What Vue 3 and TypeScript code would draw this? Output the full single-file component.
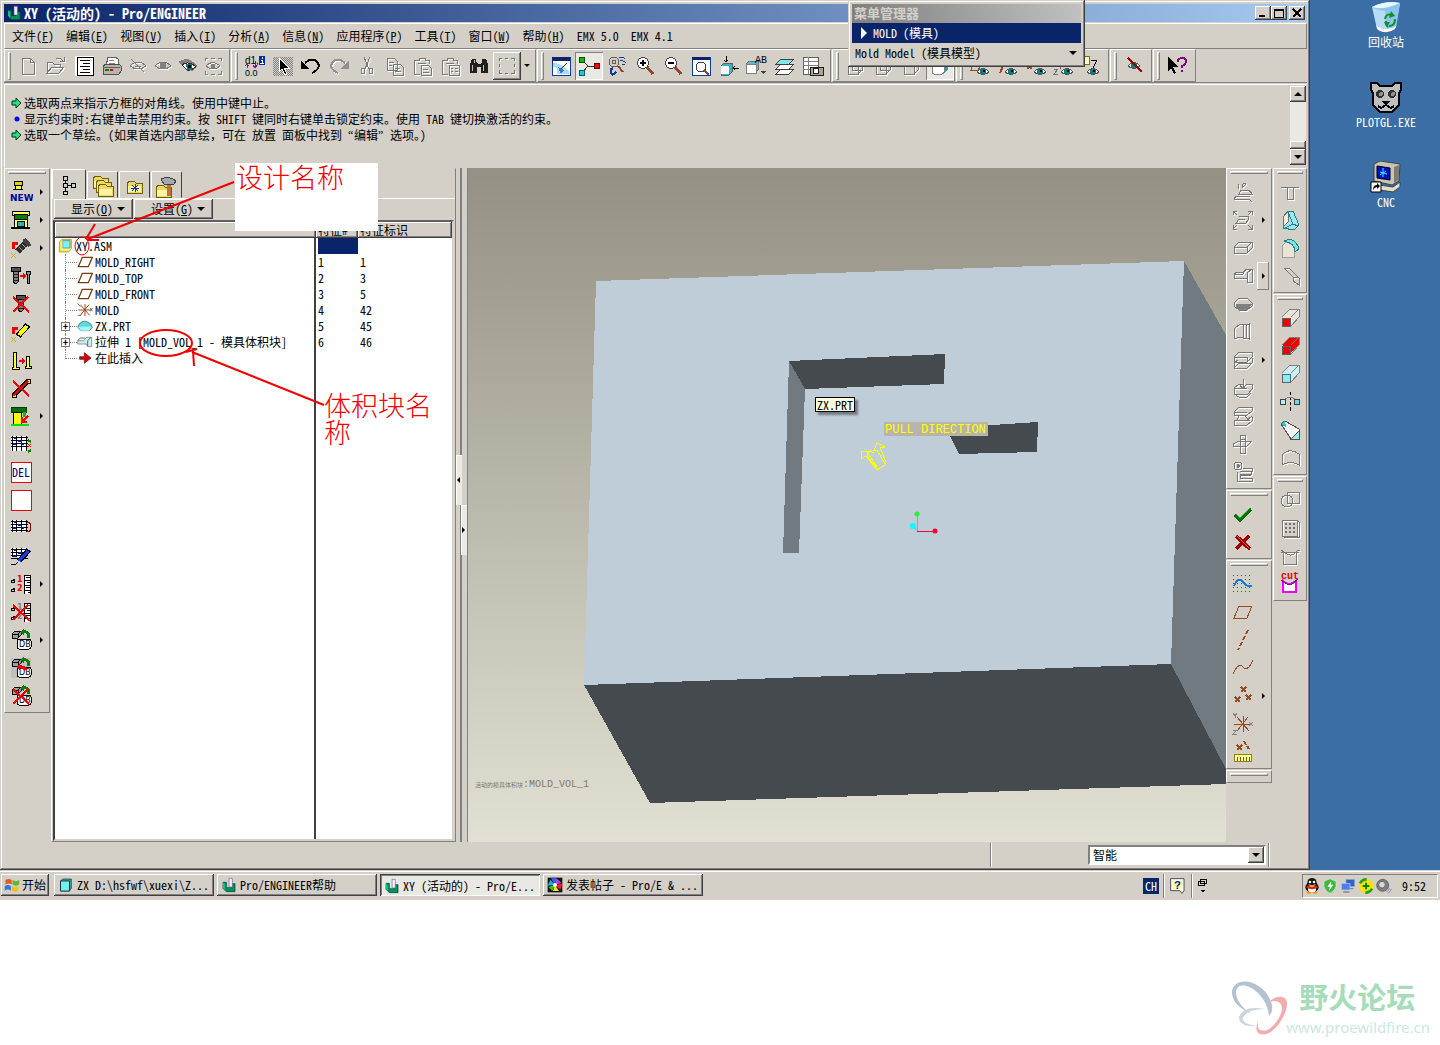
<script setup lang="ts">
import { ref } from 'vue'

interface Tool { icon: string; label: string; kind?: string; more?: boolean; boxed?: boolean }

/* ---- icon helpers: 24 x 24 grid ---- */
const line = (d: string, c = '#000', w = 1) => `<path d="${d}" fill="none" stroke="${c}" stroke-width="${w}"/>`
const fill = (d: string, c: string, s = 'none') => `<path d="${d}" fill="${c}" stroke="${s}"/>`
const gray = (d: string) => `<g transform="translate(1 1)">${line(d, '#fff')}</g>${line(d, '#787878')}`
const eye = (x: number, y: number, c = '#008080') =>
  `<g transform="translate(${x} ${y})">${fill('M0 5 Q6 -2 12 5 Q6 10 0 5z', '#fff', '#555')}<circle cx="6" cy="4.5" r="2.8" fill="${c}"/><path d="M6 3h2v2h-2z" fill="#000"/></g>`
const cross = (c = '#f00000') => line('M4 5L20 20M19 5L4 20', c, 2)
const lens = (extra: string) =>
  `<circle cx="10" cy="9" r="5.5" fill="#fff" stroke="#404040"/>${line('M14 13l6 7', '#8b4a2b', 3)}${extra}`
const grid = (h: number) =>
  `<rect x="2" y="4" width="16" height="${h}" fill="#fff"/>` + line(`M2 5h17M2 8h17M2 11h17M2 14h17M3 4v${h}M7 4v${h}M12 4v${h}M17 4v${h}`) + line('M4 12h3M9 9h4M12 12h3M5 6h2', '#0a1f8f', 2)
const db =
  fill('M3 6l3-3h6v4l-3 3H3z', '#a0a0a0', '#000') + line('M3 6h6v4M9 6l3-3') + line('M15 4q5-1 5 6', '#008000', 3) + fill('M11 4l4-3v6z', '#008000') +
  `<rect x="8" y="11" width="14" height="10" rx="2" fill="#fff" stroke="#000"/><text x="10" y="19" font-size="8" font-family="DejaVu Sans" fill="#000">DB</text>`
const numbered = (c: string) =>
  line('M3 9l3-2M3 18l3-2') + line('M2 8h3v2h-3zM2 17h3v2h-3z') +
  `<text x="8" y="10" font-size="8" font-weight="bold" font-family="DejaVu Sans" fill="${c}">1</text><text x="8" y="19" font-size="8" font-weight="bold" font-family="DejaVu Sans" fill="${c}">2</text><rect x="15" y="3" width="7" height="19" fill="#fff"/>` +
  line('M15 3h7M15 8h7M15 13h7M15 18h7M15 3v19M17 5h4M18 10h3M17 15h4M19 20h3M21 3v19')
const block = (front: string, top: string) =>
  fill('M4 11l8-8h9v7l-8 9', top) + line('M4 11l8-8h9v8l-8 9M13 11l8-8', '#808080') + `<rect x="4" y="12" width="8" height="8" fill="${front}" stroke="#606060"/>`
const bolt = fill('M2 3h9v4H2z', '#505050', '#000') + fill('M4 7h5v11l-2 2-3-2z', '#808080', '#000') + line('M4 10h5M4 13h5M4 16h5', '#222')
const folder = (x: number, y: number) => `<g transform="translate(${x} ${y})">${fill('M0 3l2-3h5l2 2h6v10H0z', '#f0d860', '#6a6200')}${fill('M1 5h13v6H1z', '#fdf3a0')}</g>`

const icons: Record<string, string> = {
  app: fill('M3 8h5v8h7v-6h6v12H8l-5-5z', '#009060', '#003828') + fill('M3 8l3 3v8l-3-3z', '#00c890') + fill('M12 2h5v13h-5z', '#e8e8f0', '#6070a0') + line('M15 3v11', '#fff'),
  new: gray('M6 4h8l4 4v12H6zM14 4v4h4'),
  open: gray('M3 19V8h5l2 2h6v3M3 19l5-6h12l-5 6zM12 5q4-2 7 2m1-4v4h-4'),
  list: '<rect x="3" y="2" width="19" height="20" fill="#fff"/>' + line('M5 3h16v18H5zM8 6h10M11 9h7M8 12h10M11 15h7M8 18h10'),
  print: fill('M8 3h7l3 2v7H6z', '#fff', '#606060') + line('M9 6h5M9 9h6', '#808080') + fill('M3 12l3-2h13l2 2v5l-2 3H3z', '#b8b4ac', '#505050') + line('M5 16h4', '#008000', 2) + line('M10 16h3', '#e00000', 2) + line('M3 13h17', '#606060'),
  hide: gray('M4 12q8-8 16 0q-8 6-16 0M9 12h6M5 5l13 13'),
  show: gray('M4 12q8-8 16 0q-8 6-16 0') + fill('M9 9h6v6H9z', '#808080'),
  view: fill('M2 8q10-6 15 0l4 4-5 5q-7-2-10-6z', '#808080') + fill('M6 11q6-5 14 2-6 4-9 3z', '#fff', '#303030') + fill('M10 10h6v6h-5z', '#007878') + fill('M12 11h3v3h-3z', '#000'),
  viewbox: gray('M4 7V4h3M10 4h4M17 4h3v3M4 17v3h3M10 20h4M17 20h3v-3M5 12q7-7 14 0q-7 6-14 0') + fill('M10 10h4v4h-4z', '#808080'),
  dim: '<text x="2" y="10" font-size="10" font-family="Liberation Sans" fill="#000">d1,</text><text x="2" y="22" font-size="9" font-family="Liberation Sans" fill="#000">0.0</text>' + line('M4 14V10M2 12l2-2 2 2M12 7v7M10 11l2 3 2-3', '#a000a0', 1) + '<rect x="16" y="2" width="6" height="9" fill="#0030a0"/><path d="M19 3v2M18 6h1v3M17 9h4" stroke="#fff" fill="none"/>',
  pointer: '<rect x="2" y="3" width="20" height="19" fill="url(#dither)"/>' + fill('M8 4v14l3-3 3 6 2-1-3-6h5z', '#000', '#fff'),
  undo: line('M6 9q8-7 13 0q3 6-6 10', '#000', 2) + fill('M2 6v9h8z', '#000'),
  redo: `<g>${line('M19 10q-8-7-13 0q-3 6 6 10', '#fff', 2)}${line('M18 9q-8-7-13 0q-3 6 6 10', '#909090', 2)}${fill('M22 6v9h-8z', '#909090')}</g>`,
  cut: gray('M9 3l5 12M15 3l-5 12M6 17a2 3 0 1 0 4 0a2 3 0 1 0-4 0M14 17a2 3 0 1 0 4 0a2 3 0 1 0-4 0'),
  copy: gray('M4 4h7l3 3v9H4zM10 10h7l3 3v8H10zM6 8h5M6 11h3M12 14h5M12 17h6'),
  paste: gray('M3 6h5V4h6v2h4v4M3 6v14h6M7 9h8M10 11h7l3 3v7H10zM12 15h5M12 18h6'),
  pastex: gray('M3 6h5V4h6v2h4v4M3 6v14h6M7 9h8M10 11h10v10H10zM12 14h2M16 14h3M12 17h2M16 17h3'),
  find: fill('M5 5h4v3l2 2h2l2-2V5h4l2 5v9h-7v-6h-4v6H3v-9z', '#202020') + line('M5 11v6M16 11v6M7 6v3', '#c0c0c0'),
  marquee: line('M4 7V4h3M10 4h3M16 4h3v3M19 10v3M19 16v3h-3M13 19h-3M7 19H4v-3M4 13v-3', '#fff').replace('<path', '<path transform="translate(1 1)"') + line('M4 7V4h3M10 4h3M16 4h3v3M19 10v3M19 16v3h-3M13 19h-3M7 19H4v-3M4 13v-3', '#707070'),
  repaint: '<rect x="3" y="3" width="18" height="18" fill="#fff" stroke="#0a3fa0"/><path d="M3 3h18v4H3z" fill="#0a246a"/>' + fill('M4 9q8 0 16 8v3H8q2-7-4-7z', '#a8dcf8') + line('M18 9l-7 7', '#203060', 1) + fill('M9 13l6 3-3 4z', '#3878c0'),
  spin: line('M5 6l6 6 9 0M11 12l-6 7', '#303030') + '<circle cx="5" cy="6" r="3" fill="#00c000" stroke="#005000"/><circle cx="20" cy="12" r="3" fill="#e01010" stroke="#700000"/><circle cx="5" cy="19" r="3" fill="#20c8d8" stroke="#006070"/>',
  orient: '<circle cx="9" cy="8" r="5" fill="#d0ccc0" stroke="#606060"/><circle cx="9" cy="8" r="2" fill="none" stroke="#606060"/>' + line('M13 12l5 6', '#8b4a2b', 2) + line('M14 4q3-2 6 1M15 7q4-1 6 2M17 10h3', '#0a3fa0') + line('M7 15q-3 3 1 6M5 16l3-2M8 21l3-3', '#0a3fa0', 2),
  zoomin: lens(line('M7 9h6M10 6v6', '#000', 2)),
  zoomout: lens(line('M7 9h6', '#000', 2)),
  refit: '<rect x="3" y="3" width="18" height="18" fill="#fff" stroke="#0a3fa0"/><path d="M3 3h18v3H3z" fill="#0a246a"/><circle cx="12" cy="13" r="5" fill="#fff" stroke="#404040"/>' + line('M15 16l5 5', '#8b4a2b', 2),
  reorient: fill('M4 12l3-3h8v9l-3 3H4z', '#30b8c8', '#606060') + '<rect x="4" y="12" width="8" height="8" fill="#fff"/>' + line('M9 2v6M7 6l2 2 2-2M22 14h-6M18 12l-2 2 2 2', '#000', 1),
  views: fill('M1 10l3-3h9v9l-3 3H1z', '#60b8c8', '#707070') + '<rect x="1" y="10" width="10" height="9" fill="#fff" stroke="#808080"/><text x="10" y="9" font-size="10" font-family="Liberation Mono" fill="#000">AB</text>' + fill('M15 17h6l-3 3z', '#404040'),
  layers: fill('M3 20l5-5h13l-5 5z', '#fff', '#404040') + fill('M3 15l5-5h13l-5 5z', '#fff', '#404040') + fill('M3 10l5-5h13l-5 5z', '#80e8e8', '#404040'),
  viewmgr: '<rect x="2" y="3" width="15" height="17" fill="#fff" stroke="#606060"/>' + line('M2 7h15M2 11h15M2 15h15M7 3v17', '#808080') + '<rect x="9" y="13" width="13" height="8" fill="#a8a498" stroke="#202020"/><circle cx="15" cy="17" r="3" fill="#fff" stroke="#202020"/>',
  wire: gray('M4 10h10v10H4zM8 6h10v10H8zM4 10l4-4M14 10l4-4M14 20l4-4'),
  hidden: gray('M4 10h10v10H4zM4 10l4-4h10v10l-4 4M8 6v10h10'),
  nohid: gray('M4 10h10v10H4zM4 10l4-4h10v10l-4 4M14 10l4-4'),
  shade: fill('M5 9l4-4h11v10l-5 5', '#20a0a0') + '<rect x="4" y="8" width="12" height="12" rx="2" fill="#fff" stroke="#808080"/>',
  planes: line('M5 4l-2 12h7l9-12M12 4h6', '#964b1e') + eye(9, 13),
  axes: line('M9 4l-1 6M7 12l-3 7', '#964b1e', 2) + eye(9, 13),
  points: line('M3 10l5 5M8 10l-5 5M10 4l4 4M17 4l-3 5', '#964b1e', 2) + eye(10, 13),
  csys: line('M5 8h12M8 15l5-9 5 6', '#964b1e') + line('M2 15h4l-4 5h4M17 9l4 4M21 9l-4 4', '#707070') + eye(9, 13),
  annot: '<rect x="0" y="2" width="9" height="8" fill="#ffffc0" stroke="#807000"/>' + line('M11 6h6l-4 8') + eye(7, 13),
  spineye: eye(6, 7) + line('M6 4l14 14', '#900000', 2),
  help: fill('M3 3v14l3-3 3 6 2-1-3-6h5z', '#000') + line('M13 8q0-4 4-4t4 3-4 5v2M17 16v2', '#800080', 2),
  mnew: fill('M5 1h8v4H5z', '#d8d800', '#000') + fill('M6 5h6v4H6z', '#fff840', '#000') + line('M4 9h10') + '<text x="1" y="21" font-size="9" font-weight="bold" font-family="DejaVu Sans" fill="#0000a0">NEW</text>',
  mold: '<rect x="3" y="3" width="17" height="4" fill="#ffff60" stroke="#000"/><rect x="5" y="6" width="13" height="5" fill="#008000" stroke="#000"/><rect x="5" y="11" width="13" height="9" fill="#ffff60" stroke="#000"/><rect x="8" y="13" width="7" height="5" fill="#20b8b8" stroke="#000"/>' + line('M2 20h19', '#000', 2),
  screwnew: line('M8 16l8-8', '#303030', 6) + line('M7 14l4 4M10 11l4 4M13 8l4 4', '#a0a0a0') + line('M15 3l6 7', '#404040', 4) + line('M4 13V7h5', '#f00000', 3) + line('M2 17l5 5M7 17l-5 5', '#d0b000'),
  screwedit: bolt + line('M11 12h5', '#f00000', 2) + fill('M14 9l3 3-3 3z', '#f00000') + fill('M17 7h4v3h-1v9h-2V10h-1z', '#909090', '#000'),
  screwdel: '<g transform="translate(5 0)">' + bolt + '</g>' + cross(),
  pinnew: line('M9 16l10-11', '#000', 6) + line('M10 15l8-9', '#ffff00', 4) + line('M4 14V8h5', '#f00000', 3) + line('M2 17l5 5M7 17l-5 5', '#d0b000'),
  pinedit: fill('M4 4h3v15h3v2H3v-2h1z', '#ffff40', '#000') + line('M10 13h5', '#f00000', 2) + fill('M13 10l3 3-3 3z', '#f00000') + fill('M17 8h3v10h2v2h-6v-2h1z', '#ffff40', '#000'),
  pindel: line('M5 19L19 5', '#000', 5) + fill('M17 3h4v4h-4zM3 17h4v4H3z', '#ffff40', '#000') + cross(),
  plate: '<rect x="2" y="3" width="15" height="5" fill="#007000" stroke="#004000"/><rect x="4" y="8" width="8" height="12" fill="#ffff00" stroke="#000"/>' + line('M2 21h18', '#00e000', 2) + line('M15 8v5', '#00c000', 3) + line('M19 12l-5 5M13 13v5h5', '#f00000', 2),
  bom: grid(15) + line('M19 8l3 2M22 18l-3 2', '#008000', 2) + line('M19 12l3 3M22 12l-3 3', '#f00000', 1),
  del: '<rect x="2" y="2" width="20" height="20" fill="#fff" stroke="#f00000"/><text x="3" y="17" font-size="12" font-family="Noto Sans Mono CJK SC" fill="#00007a">DEL</text>',
  blank: '<rect x="2" y="2" width="20" height="20" fill="#fff" stroke="#f00000"/>',
  bomsec: grid(12) + line('M18 6q4 0 4 5t-4 5', '#900000', 1),
  bomedit: grid(9) + line('M10 17L20 6', '#000', 5) + line('M10 17L19 7', '#1040e0', 3) + line('M2 20h5l2-2'),
  num: numbered('#f00000'),
  numdel: numbered('#808080') + cross(),
  db1: db,
  db2: '<rect x="2" y="2" width="20" height="20" fill="#c0c0c0"/>' + db + line('M17 14q-2-4-8-3', '#f00000', 3) + fill('M7 11l4-3v6z', '#f00000'),
  db3: db + cross(),
  r1: gray('M3 19h15l3 3M3 19q0-3 7-3h9M8 14l2-4h8l3 4zM7 4v5M11 8V5q1-2 4-1l-3 3'),
  r2: gray('M2 7V3h4M2 3l4 4M17 3h4v4M21 3l-4 4M2 17v4h4M2 21l4-4M17 21h4v-4M21 21l-4-4M8 8h7q3 0 3 3l-3 4H5l3-4h6'),
  r3: gray('M3 11l5-5h13v6l-5 5H3zM3 11h13v6M16 11l5-5'),
  r4: gray('M3 10h9l3-5h6v13h-5v-4H3zM3 10l3-2h6l3-3M16 9l5-4M16 9v9'),
  r5: fill('M3 12h18l-6 6H8z', '#808080') + gray('M3 11l5-5h8l5 5v3l-5 4H8l-5-4z'),
  r6: gray('M3 19V9q6-6 9-4v13q-4-1-9 1zM12 5l6-1v15l-6-1M15 5v13'),
  r7: gray('M3 9l5-5h13v5l-5 5H3zM3 9h13v5M3 15l4-3M3 15v5h13l5-5v-5M3 20l5-5h13'),
  r8: gray('M3 12l5-4h4M15 8h6v5l-4 5H3v-6h13M12 3v9M9 9l3 4 3-4M3 18l5 3h8l4-4'),
  r9: gray('M3 8l5-5h13v4l-5 4H3zM3 8h13M8 12l-2 4h12l-4-4M3 16h13l5-4M3 16v5h13l5-4v-4'),
  r10: gray('M2 12l6-3h13l-5 5H2zM9 3h5v18H9zM9 7h5'),
  r11: gray('M3 6a4 4 0 1 0 8 0a4 4 0 1 0-8 0M6 4l3 2-3 2zM12 8h9v3H9M9 14h11v-3M6 12v9h15v-3H9M9 18v-3h11'),
  ok: line('M4 13l5 5L20 7', '#007000', 4) + line('M5 12l4 4 10-10', '#18b818', 1),
  no: line('M5 6l14 13M18 6L5 19', '#a00000', 4) + line('M5 5l13 13', '#e05050', 1),
  sketch: line('M2 3h20M2 7h20M2 11h20M2 15h20M2 19h20', '#2050b0').replace('/>', ' stroke-dasharray="1 3"/>') + line('M3 14q4-10 9-4t9 4', '#1878e0', 2),
  plane: line('M3 18L8 6h13l-5 12z', '#964b1e'),
  axis: line('M17 2l-2 4M14 8l-2 4M11 14l-2 4M8 20l-1 2', '#964b1e', 2),
  curve: line('M2 18q5-12 10-7t10-7', '#964b1e'),
  pts: line('M10 3l5 5M15 3l-5 5M4 13l5 5M9 13l-5 5M15 11l5 5M20 11l-5 5', '#964b1e', 2),
  coord: line('M3 12h18M12 4l0 16M6 5l12 14M17 5L6 19', '#964b1e') + line('M2 1l2 3 2-3M4 4v2M18 10l4 4M22 10l-4 4M2 18h4l-4 4h4', '#808080'),
  ruler: line('M6 5l5 5M11 5l-5 5M13 1l2 4M16 6l2 3', '#964b1e', 2) + '<rect x="3" y="14" width="17" height="7" fill="#fffc90" stroke="#908020"/>' + line('M6 17v4M9 17v4M12 17v4M15 17v4M18 17v4', '#606020'),
  hole: gray('M3 7h6v12h6V7h6M9 7h6'),
  shell: fill('M5 20V9l5-6h5l6 14-5 5z', '#9ce8ec', '#208088') + fill('M5 9l5-5 1 9-6 6z', '#f0ece0', '#707070') + line('M10 4l5 12-8 4M15 16l5 2', '#208088'),
  round: fill('M4 10q5-7 12-2v13H4z', '#e8e4d8', '#a0a098') + fill('M6 5q11-5 15 8l-4 3q0-9-11-11z', '#80e0e8', '#208088'),
  chamfer: gray('M6 4h5l10 10v7l-6-4v-4L6 4M15 13l6 1'),
  b1: block('#f00000', '#e8e4d8'), b2: block('#f00000', '#f00000'), b3: block('#80f0f8', '#c8f0f0'),
  mirror: '<circle cx="5" cy="12" r="3" fill="#b0f0f8" stroke="#404040"/><circle cx="19" cy="12" r="3" fill="#70d8e0" stroke="#404040"/>' + line('M12 2v3M12 7v3M12 12v3M12 17v4') + line('M7 9q5-4 10 0', '#808080'),
  taper: fill('M3 6l4-3 14 8v10h-8L3 6z', '#f4f4f0', '#505050') + fill('M3 6l4-3 1 6z', '#20c8d0') + fill('M13 21l8-8v8z', '#a0e8ec', '#505050'),
  warp: gray('M4 19V9q8-8 17-1v11q-8-5-17 0'),
  t1: gray('M9 4h12v11H9zM3 13a6 6 0 1 0 12 0a6 6 0 1 0-12 0'),
  t2: gray('M4 4h15v16H4zM19 4l2 2v15H6') + line('M7 8h11M7 12h11M7 16h11', '#707070', 2).replace('/>', ' stroke-dasharray="2 2"/>'),
  t3: gray('M5 8v12h13V8M3 6l4 3q7 5 12-2l3-1M3 8h18'),
  cuticon: '<text x="3" y="7" font-size="10" font-family="Liberation Mono" font-weight="bold" fill="#e00000">cut</text>' + '<path d="M5 9v11h13V9q-7 6-13 0z" fill="#fff" stroke="#f000f0" stroke-width="2"/>' + line('M3 8l6 4h5l6-5', '#900090'),
  tree: line('M6 3h4v4H6zM6 10h4v4H6zM6 18h4v3H6zM14 10h4v4h-4zM8 7v3M8 14v4M10 12h4'),
  folders: folder(2, 1) + folder(5, 5) + folder(7, 9),
  fav: folder(4, 6) + line('M12 9v8M8 13h8M9 10l6 6M15 10l-6 6', '#0030c0'),
  tools: folder(1, 10) + line('M14 8v13', '#c07038', 4) + fill('M6 4q6-3 12 0l3 2-2 3H9z', '#a0a8b0', '#404040'),
  asm: fill('M2 6l4-4h14v14l-4 5H2z', '#f8e850', '#908000') + fill('M7 4h11v11H7z', '#80f0f8', '#208088') + line('M6 4v13h12', '#fff'),
  datum: line('M2 19l6-14h15l-6 14z', '#7a3a10', 2),
  origin: line('M2 12h19M5 4l14 16M18 4L5 20M12 3v18', '#964b1e', 1.5) + line('M1 2l4 5M1 20h5M20 9l3 5M23 9l-3 5', '#707070', 1.5),
  part: fill('M1 14q1-6 8-9h5q8 3 9 9l-4 5H6z', '#60d8dc', '#206868') + fill('M2 13h20l-4 6H6z', '#a8f4f4'),
  extrude: fill('M1 10h9l4-5h8v14h-6l-2-4H1z', '#c8f0f0', '#606868') + line('M1 10l4-4h7M16 10v8M16 10l5-5', '#606868', 1.5),
  insert: fill('M4 10h7V4l10 8-10 8v-6H4z', '#d80000', '#500000'),
  winflag: fill('M2 6q4-3 8 0v6q-4-3-8 0z', '#e85820') + fill('M11 6q5 3 9 0v6q-4 3-9 0z', '#60b830') + fill('M1 14q4-3 8 0v6q-4-3-8 0z', '#3078e0') + fill('M10 14q5 3 9 0v6q-4 3-9 0z', '#f0c020'),
  cube: fill('M4 6l3-3h13v14l-3 4H4z', '#40a0a8', '#003838') + '<rect x="4" y="6" width="13" height="15" fill="#70f0f0" stroke="#000"/>',
  wheel: '<rect x="1" y="1" width="22" height="22" fill="#111"/>' + fill('M12 12L6 2h8z', '#4060ff') + fill('M12 12L14 2l8 7z', '#b040e0') + fill('M12 12l11-2-3 9z', '#f02020') + fill('M12 12l6 9H9z', '#ffe000') + fill('M12 12l-4 9-6-6z', '#40c020') + fill('M12 12L1 13 5 4z', '#20b0e0') + '<circle cx="12" cy="12" r="3" fill="#fff"/>',
  penguin: '<ellipse cx="12" cy="14" rx="10" ry="8" fill="#101010"/><ellipse cx="12" cy="7" rx="7" ry="7" fill="#101010"/><ellipse cx="12" cy="17" rx="6" ry="5" fill="#fff"/><circle cx="9" cy="6" r="2" fill="#fff"/><circle cx="15" cy="6" r="2" fill="#fff"/>' + line('M7 10q5 3 10 0', '#f0a000', 2) + line('M4 13q8 4 16 0', '#e02020', 4) + line('M4 22h6M14 22h6', '#f0a000', 3),
  shield: fill('M12 1l9 4v8q-2 7-9 10Q5 20 3 13V5z', '#40b840', '#d8f0d0') + fill('M14 5l-6 8h4l-2 7 7-10h-4z', '#fff'),
  net: '<rect x="9" y="2" width="13" height="11" fill="#3060d0" stroke="#a0a8c0"/><rect x="2" y="8" width="13" height="10" fill="#4880f0" stroke="#c0c8e0"/>' + line('M5 21h9M15 16h5', '#8088a0', 2),
  plus360: '<circle cx="12" cy="12" r="11" fill="#f8e010"/>' + line('M3 8q3-6 10-6M21 16q-3 6-10 6', '#20a020', 4) + line('M12 7v10M7 12h10', '#008000', 3),
  sound: '<circle cx="10" cy="11" r="9" fill="#808080" stroke="#484848"/><circle cx="9" cy="10" r="5" fill="#d8d8d8" stroke="#404040"/>' + line('M20 15q-1 4-4 6M23 16q-1 5-5 7', '#8090c0', 1.5),
  tip: fill('M1 1h20v18l-3 4-3-4H1z', '#fff', '#000') + '<rect x="4" y="4" width="14" height="13" fill="#ffffa0"/><text x="6" y="17" font-size="17" font-weight="bold" font-family="Liberation Sans" fill="#0020a0">?</text>',
}

const t = (icon: string, label: string, extra: Partial<Tool> = {}): Tool => ({ icon, label, ...extra })

const menus = [['文件', 'F'], ['编辑', 'E'], ['视图', 'V'], ['插入', 'I'], ['分析', 'A'], ['信息', 'N'], ['应用程序', 'P'], ['工具', 'T'], ['窗口', 'W'], ['帮助', 'H'], ['EMX 5.0', ''], ['EMX 4.1', '']]

const toolbars: { name: string; tools: Tool[] }[] = [
  { name: 'file', tools: [t('new', '新建'), t('open', '打开'), t('list', '列表'), t('print', '打印'), t('hide', '隐藏', { kind: 'slim' }), t('show', '显示', { kind: 'slim' }), t('view', '查看', { kind: 'slim' }), t('viewbox', '框选查看', { kind: 'slim' })] },
  { name: 'edit', tools: [t('dim', '尺寸'), t('pointer', '选取'), t('undo', '撤消'), t('redo', '重做'), t('cut', '剪切'), t('copy', '复制'), t('paste', '粘贴'), t('pastex', '选择性粘贴'), t('find', '查找'), t('marquee', '选取框', { kind: 'raised', more: true })] },
  { name: 'look', tools: [t('repaint', '重画'), t('spin', '旋转中心', { kind: 'down' }), t('orient', '定向模式'), t('zoomin', '放大'), t('zoomout', '缩小'), t('refit', '重新调整'), t('reorient', '重定向'), t('views', '已命名视图'), t('layers', '层'), t('viewmgr', '视图管理器')] },
  { name: 'style', tools: [t('wire', '线框'), t('hidden', '隐藏线'), t('nohid', '无隐藏线'), t('shade', '着色', { kind: 'down' })] },
  { name: 'datum', tools: [t('planes', '基准平面'), t('axes', '基准轴'), t('points', '基准点'), t('csys', '坐标系'), t('annot', '注释')] },
  { name: 'spin', tools: [t('spineye', '遮蔽')] },
  { name: 'help', tools: [t('help', '帮助')] },
]

const leftTools: Tool[] = [t('mnew', '新建组件', { more: true }), t('mold', '模架', { more: true }), t('screwnew', '新建螺钉', { more: true }), t('screwedit', '编辑螺钉'), t('screwdel', '删除螺钉'), t('pinnew', '新建销钉'), t('pinedit', '编辑销钉'), t('pindel', '删除销钉'), t('plate', '顶杆', { more: true }), t('bom', '明细表'), t('del', '删除'), t('blank', '空白'), t('bomsec', '明细表剖面'), t('bomedit', '编辑明细表'), t('num', '编号', { more: true }), t('numdel', '删除编号'), t('db1', '数据库', { more: true }), t('db2', '更新数据库'), t('db3', '删除数据库')]

const midBars: Tool[][] = [
  [t('r1', '模具型腔'), t('r2', '收缩', { more: true }), t('r3', '工件'), t('r4', '体积块', { more: true, boxed: true }), t('r5', '轮廓'), t('r6', '分型面'), t('r7', '分割', { more: true }), t('r8', '型腔插入'), t('r9', '开模'), t('r10', '修剪'), t('r11', '模型树')],
  [t('ok', '确定'), t('no', '取消')],
  [t('sketch', '草绘'), t('plane', '平面'), t('axis', '轴'), t('curve', '曲线'), t('pts', '点', { more: true }), t('coord', '坐标系'), t('ruler', '分析')],
  [],
]
const farBars: Tool[][] = [
  [t('hole', '孔'), t('shell', '壳'), t('round', '倒圆角'), t('chamfer', '倒角')],
  [t('b1', '拉伸'), t('b2', '旋转'), t('b3', '偏移'), t('mirror', '镜像'), t('taper', '拔模'), t('warp', '扭曲')],
  [t('t1', '合并'), t('t2', '阵列'), t('t3', '修剪面'), t('cuticon', '切剪')],
]

const messages = [
  ['arrow', '选取两点来指示方框的对角线。使用中键中止。'],
  ['dot', '显示约束时:右键单击禁用约束。按 SHIFT 键同时右键单击锁定约束。使用 TAB 键切换激活的约束。'],
  ['arrow', '选取一个草绘。(如果首选内部草绘，可在 放置 面板中找到 “编辑” 选项。)'],
]
/* quotation marks are set half-width, so they become runs of their own */
const runs = (s: string) => s.split(/([“”])/)
const isQuote = (s: string) => s === '“' || s === '”'

const rows = [
  { icon: 'datum', name: 'MOLD_RIGHT', no: '1', id: '1' },
  { icon: 'datum', name: 'MOLD_TOP', no: '2', id: '3' },
  { icon: 'datum', name: 'MOLD_FRONT', no: '3', id: '5' },
  { icon: 'origin', name: 'MOLD', no: '4', id: '42' },
  { icon: 'part', name: 'ZX.PRT', no: '5', id: '45', plus: true },
  { icon: 'extrude', name: '拉伸 1 [MOLD_VOL_1 - 模具体积块]', no: '6', id: '46', plus: true },
  { icon: 'insert', name: '在此插入', no: '', id: '', last: true },
]
const tabs = [['tree', '模型树'], ['folders', '文件夹'], ['fav', '收藏夹'], ['tools', '连接']]
const tasks = [
  { icon: 'cube', text: 'ZX D:\\hsfwf\\xuexi\\Z...' },
  { icon: 'app', text: 'Pro/ENGINEER帮助' },
  { icon: 'app', text: 'XY (活动的) - Pro/E...', on: true },
  { icon: 'wheel', text: '发表帖子 - Pro/E & ...' },
]
const tray = ['penguin', 'shield', 'net', 'plus360', 'sound']
const filter = ref('智能')
</script>

<template>
  <div class="page">
    <svg class="defs" width="0" height="0" aria-hidden="true">
      <defs><pattern id="dither" width="2" height="2" patternUnits="userSpaceOnUse"><path d="M0 0h1v1H0zM1 1h1v1H1z" fill="#808080" /></pattern></defs>
    </svg>
    <div class="screen">
      <div class="desk">
        <main class="window">
          <header class="title">
            <svg class="ic s16" viewBox="0 0 24 24" v-html="icons.app" />
            <h1>XY (活动的) - Pro/ENGINEER</h1>
            <button class="cap" aria-label="最小化"><svg viewBox="0 0 12 10"><path d="M2 8h6" stroke="#000" stroke-width="2" /></svg></button>
            <button class="cap" aria-label="最大化"><svg viewBox="0 0 12 10"><path d="M1 1h9v8H1z M1 2h9" stroke="#000" fill="none" /></svg></button>
            <button class="cap close" aria-label="关闭"><svg viewBox="0 0 12 10"><path d="M2 1l8 8M10 1L2 9" stroke="#000" stroke-width="2" /></svg></button>
          </header>
          <nav class="menu">
            <button v-for="m in menus" :key="m[0]">{{ m[0] }}<template v-if="m[1]">(<u>{{ m[1] }}</u>)</template></button>
          </nav>
          <div class="toolrow">
            <div v-for="g in toolbars" :key="g.name" class="group" :class="'g-' + g.name">
              <i class="vgrip" />
              <template v-for="b in g.tools" :key="b.icon">
                <button class="tool" :class="b.kind" :aria-label="b.label"><svg class="ic" viewBox="0 0 24 24" v-html="icons[b.icon]" /></button>
                <button v-if="b.more" class="drop" aria-label="更多"><i class="tri down" /></button>
              </template>
            </div>
          </div>
          <section class="log">
            <ul>
              <li v-for="m in messages" :key="m[1]">
                <svg v-if="m[0] === 'arrow'" viewBox="0 0 12 12"><path d="M1 4h4V1l5 5-5 5V8H1z" fill="#20e080" stroke="#003010" /></svg>
                <svg v-else viewBox="0 0 12 12"><circle cx="6" cy="6" r="2.5" fill="#0000ff" /></svg>
                <span v-for="(r, i) in runs(m[1])" :key="i" :class="{ quote: isQuote(r) }">{{ r }}</span>
              </li>
            </ul>
            <div class="scroll">
              <button aria-label="向上滚动"><i class="tri up" /></button>
              <div class="track"><div class="thumb" /></div>
              <button aria-label="向下滚动"><i class="tri down" /></button>
            </div>
          </section>

          <div class="work">
            <aside class="side left">
              <div class="bar">
                <i class="hgrip" />
                <div v-for="b in leftTools" :key="b.icon" class="slot">
                  <button :aria-label="b.label"><svg class="ic" viewBox="0 0 24 24" v-html="icons[b.icon]" /></button>
                  <button v-if="b.more" class="more" aria-label="更多"><i class="tri right" /></button>
                </div>
              </div>
            </aside>

            <section class="tree">
              <div class="tabs">
                <button v-for="(tb, i) in tabs" :key="tb[0]" :class="{ on: i === 0 }" :aria-label="tb[1]"><svg class="ic" viewBox="0 0 24 24" v-html="icons[tb[0]]" /></button>
              </div>
              <div class="opts">
                <button>显示(<u>O</u>)<i class="tri down" /></button>
                <button>设置(<u>G</u>)<i class="tri down" /></button>
              </div>
              <div class="list">
                <table>
                  <colgroup><col class="c1"><col class="c2"><col></colgroup>
                  <thead><tr><th aria-label="模型" /><th>特征#</th><th>特征标识</th></tr></thead>
                  <tbody>
                    <tr>
                      <td><div class="node root"><svg class="ic s16" viewBox="0 0 24 24" v-html="icons.asm" /><span>XY.ASM</span></div></td>
                      <td class="picked" /><td />
                    </tr>
                    <tr v-for="r in rows" :key="r.name">
                      <td>
                        <div class="node" :class="{ last: r.last }">
                          <i class="branch" /><b v-if="r.plus" class="plus">+</b>
                          <svg class="ic s16" viewBox="0 0 24 24" v-html="icons[r.icon]" /><span>{{ r.name }}</span>
                        </div>
                      </td>
                      <td>{{ r.no }}</td><td>{{ r.id }}</td>
                    </tr>
                  </tbody>
                </table>
              </div>
            </section>

            <div class="split">
              <button class="fold a" aria-label="折叠"><i class="tri leftw" /></button>
              <button class="fold b" aria-label="展开"><i class="tri right" /></button>
            </div>

            <section class="view">
              <svg viewBox="468 168 758 674" preserveAspectRatio="xMaxYMid slice">
                <g shape-rendering="crispEdges">
                  <path d="M596 281L1184 261L1171 664L584 685z" fill="#bfcdd9" />
                  <path d="M1184 261L1226 335V770L1171 664z" fill="#717981" />
                  <path d="M584 685L1171 664L1226 769V784L650 803z" fill="#444a4d" />
                  <path d="M789 361L945 354L944 384L805 389z" fill="#444a4d" />
                  <path d="M789 361L805 389L799 553L783 553z" fill="#717981" />
                  <path d="M946 428L1038 422L1037 452L959 454z" fill="#444a4d" />
                  <rect x="884" y="422" width="104" height="14" fill="#b8b4a8" />
                  <path d="M877 470l8-5v-5l-5-13 5 0-8-4-3 7 3 0 8 14M877 470l-11-14-5 3v-7l9-1-3 5 10 12M867 452l10 15M870 451l4 2" fill="none" stroke="#ffff00" />
                  <path d="M917 531h18" stroke="#f00030" /><path d="M917 531v-16" stroke="#30f030" /><path d="M917 531l-4-5" stroke="#00ffff" />
                </g>
                <circle cx="935" cy="531" r="2.5" fill="#f00030" /><circle cx="917" cy="514" r="2.5" fill="#30f030" /><circle cx="913" cy="526" r="3" fill="#00ffff" />
                <text x="885" y="433" class="pull">PULL DIRECTION</text>
                <text x="475" y="787" class="active"><tspan class="tiny">活动的模具体积块</tspan>:MOLD_VOL_1</text>
              </svg>
              <span class="tipbox">ZX.PRT</span>
            </section>

            <aside v-for="(col, n) in [midBars, farBars]" :key="n" class="side" :class="n ? 'far' : 'mid'">
              <div v-for="(bar, k) in col" :key="k" class="bar">
                <i class="hgrip" />
                <div v-for="b in bar" :key="b.icon" class="slot">
                  <button :aria-label="b.label"><svg class="ic" viewBox="0 0 24 24" v-html="icons[b.icon]" /></button>
                  <button v-if="b.more" class="more" :class="{ boxed: b.boxed }" aria-label="更多"><i class="tri right" /></button>
                </div>
              </div>
            </aside>
          </div>

          <footer class="status">
            <i class="sep" />
            <label class="combo"><select v-model="filter" aria-label="选取过滤器"><option>智能</option></select><span><i class="tri down" /></span></label>
            <i class="sep" />
          </footer>
        </main>

        <aside class="desktop">
          <a href="#"><svg viewBox="0 0 32 32">
            <path d="M2 6Q14 0 30 2L26 26q-8 7-19 2z" fill="#b8dcf8" /><path d="M2 6Q14 10 30 2q-14-3-28 4z" fill="#e8f6ff" /><path d="M2 6Q12 10 30 2l-4 24q-4 4-9 4l-2-20Q7 9 2 6z" fill="#8cc4f0" /><path d="M6 24q8 8 20 1l-1 3q-8 6-17 1z" fill="#fff" />
            <path d="M15 18q1-6 7-4M25 18q0 7-6 7M16 20q-1 3 2 6" fill="none" stroke="#109020" stroke-width="2" /><path d="M21 10l4 5-6 2zM14 21l6 0-3 5z" fill="#109020" />
          </svg><span>回收站</span></a>
          <a href="#"><svg viewBox="0 0 32 32" shape-rendering="crispEdges">
            <path d="M1 2h6l3 3h12l3-3h6v7l-2 3v12l-4 4-3 3H10l-3-3-4-4V12L1 9z" fill="#c0c0c0" stroke="#000" stroke-width="2" />
            <circle cx="10" cy="13" r="4" fill="#303030" /><circle cx="22" cy="13" r="4" fill="#303030" /><circle cx="11" cy="13" r="2" fill="#909090" /><circle cx="23" cy="13" r="2" fill="#909090" /><path d="M12 20h8l-3 4h-2z" /><path d="M8 25l3 2 5-3 5 3 3-2" fill="none" stroke="#000" stroke-width="2" />
          </svg><span>PLOTGL.EXE</span></a>
          <a href="#"><svg viewBox="0 0 32 32">
            <path d="M4 3l6-3 20 3-1 17-7 4L4 20z" fill="#c8c4b8" stroke="#404040" /><path d="M24 6l5-2v15l-5 3z" fill="#807c70" /><path d="M7 5l13 2v12L7 17z" fill="#0010c0" stroke="#000" /><path d="M13 7v9M10 11l7 2M10 14l6-4" stroke="#40f0ff" /><path d="M3 23l20 3 7-5v5l-7 5L3 28z" fill="#e0dcd0" stroke="#404040" />
            <path d="M1 21h10v10H1z" fill="#fff" stroke="#000" /><path d="M3 29q0-5 4-5v-2l3 3-3 3v-2q-2 0-4 3z" />
          </svg><span>CNC</span></a>
        </aside>
      </div>

      <footer class="taskbar">
        <button class="start"><svg class="ic s16" viewBox="0 3 21 19" v-html="icons.winflag" />开始</button>
        <button v-for="k in tasks" :key="k.text" class="task" :class="{ on: k.on }"><svg class="ic s16" viewBox="0 0 24 24" v-html="icons[k.icon]" />{{ k.text }}</button>
        <div class="lang">
          <button class="ch">CH</button><i class="sep" />
          <button aria-label="帮助"><svg class="ic s16" viewBox="0 0 24 24" v-html="icons.tip" /></button><i class="sep" />
          <button class="restore" aria-label="选项"><svg viewBox="0 0 10 16"><path d="M3 1h6v4H3zM1 3h6v4H1z" fill="#d4d0c8" stroke="#000" /><path d="M3 12h5l-2 3z" /></svg></button>
        </div>
        <div class="tray">
          <svg v-for="k in tray" :key="k" class="ic s16" viewBox="0 0 24 24" v-html="icons[k]" />
          <time>9:52</time>
        </div>
      </footer>

      <section class="manager">
        <h2>菜单管理器</h2>
        <button class="sel"><svg viewBox="0 0 8 12"><path d="M1 0l6 6-6 6z" fill="#fff" /></svg>MOLD (模具)</button>
        <button class="sub">Mold Model (模具模型)<i class="tri down" /></button>
      </section>

      <div class="note box">设计名称</div>
      <div class="note vol">体积块名称</div>
      <svg class="marks" width="440" height="420" aria-hidden="true">
        <g fill="none" stroke="#f00000">
          <ellipse cx="82" cy="246" rx="7" ry="9" /><ellipse cx="166" cy="343" rx="26" ry="13" stroke-width="2" />
          <path d="M234 182L88 239M95 224l-9 15M87 240h12" stroke-width="2" /><path d="M324 405L192 352M186 352l11-3M193 351l1 15" stroke-width="2" />
        </g>
      </svg>
    </div>

    <footer class="brand">
      <svg viewBox="0 0 58 58" aria-hidden="true">
        <path fill-rule="evenodd" fill="#b4c2d0" d="M2 12C5 -3 30 0 40 20q5 11-1 17q-1-13-11-23C16 3 5 5 6 15q2 12 16 20Q1 26 2 12z" />
        <path fill="#f2abae" d="M57 26C58 15 45 16 38 24q7-4 12 0q5 6-3 18T30 51q-3-2-2-9q-4 10 2 13C42 59 56 38 57 26z" />
        <path fill="#ccd3dc" d="M35 30Q13 26 9 38q0 10 17 9q-15-2-13-8q4-9 22-9z" />
      </svg>
      <div><strong>野火论坛</strong><a href="#">www.proewildfire.cn</a></div>
    </footer>
  </div>
</template>

<style>
body { margin: 0; background: #fff; }
</style>

<style scoped>
* { box-sizing: border-box; }
.page { min-height: 100vh; display: flex; flex-direction: column; font: 12px/16px "Noto Sans Mono CJK SC", "Noto Sans CJK SC", monospace; color: #000; overflow: hidden; }
button { font: inherit; color: inherit; background: none; border: 0; padding: 0; margin: 0; }
u { text-underline-offset: 1px; }
.defs { position: absolute; }
.ic { display: block; width: 24px; height: 24px; flex: none; shape-rendering: crispEdges; }
.s16 { width: 16px; height: 16px; shape-rendering: auto; }
.tri { display: block; width: 0; height: 0; border: 4px solid transparent; flex: none; }
.tri.down { border-top-color: #000; border-bottom: 0; }
.tri.up { border-bottom-color: #000; border-top: 0; }
.tri.right { border-width: 3px; border-left-color: #000; border-right: 0; }
.tri.leftw { border-width: 3px; border-right-color: #000; border-left: 0; }
.screen { position: relative; flex: 1; display: flex; flex-direction: column; }
.desk { flex: 1; display: flex; background: #3a6ea5; }

.window { flex: 1; min-width: 0; display: flex; flex-direction: column; background: #d4d0c8; padding: 4px 3px 2px 4px; box-shadow: inset -1px -1px #404040, inset 1px 1px #d4d0c8, inset -2px -2px #808080, inset 2px 2px #fff; }
.title { height: 18px; display: flex; align-items: center; padding: 0 2px 0 2px; background: linear-gradient(90deg, #0a246a, #a6caf0); color: #fff; }
.title h1 { flex: 1; margin: 0 0 0 2px; font-size: 14px; line-height: 18px; }
.cap { width: 16px; height: 14px; background: #d4d0c8; box-shadow: inset -1px -1px #404040, inset 1px 1px #fff, inset -2px -2px #808080; }
.cap.close { margin-left: 2px; }
.cap svg { display: block; width: 12px; height: 10px; margin: 2px; shape-rendering: crispEdges; }
.menu { margin-top: 1px; height: 26px; display: flex; align-items: center; gap: 12px; padding-left: 7px; border: 1px solid; border-color: #fff #808080 #808080 #fff; white-space: nowrap; }
.toolrow { height: 34px; display: flex; border-bottom: 1px solid #808080; }
.group { display: flex; align-items: center; border: 1px solid; border-color: #fff #808080 #808080 #fff; padding-left: 3px; margin-right: 1px; }
.vgrip { width: 3px; height: 28px; border: 1px solid; border-color: #fff #808080 #808080 #fff; margin-right: 3px; }
.tool { width: 28px; height: 28px; padding: 2px; }
.tool.slim { width: 25px; padding: 2px 0; }
.tool.raised { box-shadow: inset -1px -1px #404040, inset 1px 1px #fff, inset -2px -2px #808080; }
.tool.down { background: #eae8e3; box-shadow: inset 1px 1px #808080, inset -1px -1px #fff; }
.drop { width: 14px; height: 28px; padding-left: 3px; }
.drop .tri { border-width: 3px; border-bottom: 0; }
.g-file, .g-look, .g-spin { padding-right: 3px; }
.g-datum { padding-right: 2px; }
.g-help { padding-right: 4px; }

.log { height: 84px; margin-top: 1px; display: flex; border: 1px solid; border-color: #fff transparent transparent #fff; }
.log ul { flex: 1; list-style: none; margin: 0; padding: 10px 0 0 6px; }
.log li { display: flex; align-items: center; height: 16px; white-space: pre; }
.log li svg { width: 12px; height: 12px; margin-right: 1px; }
.quote { width: 6px; font-family: "Liberation Serif", serif; }
.scroll { width: 16px; margin: 1px 0 2px; display: flex; flex-direction: column; background: #eae8e3; }
.scroll button, .thumb { background: #d4d0c8; box-shadow: inset -1px -1px #404040, inset 1px 1px #fff, inset -2px -2px #808080; }
.scroll button { height: 16px; padding-left: 4px; }
.track { flex: 1; display: flex; flex-direction: column; justify-content: flex-end; }
.thumb { height: 8px; }

.work { flex: 1; display: flex; align-items: stretch; }
.side { flex: none; display: flex; flex-direction: column; gap: 1px; }
.side.left, .side.mid { width: 46px; }
.side.far { width: 34px; margin-left: 1px; }
.bar { border: 1px solid; border-color: #fff #808080 #808080 #fff; padding: 2px 2px 2px; }
.hgrip { display: block; height: 3px; margin: 0 1px 4px; border: 1px solid; border-color: #fff #808080 #808080 #fff; }
.slot { display: flex; align-items: center; height: 28px; padding-left: 2px; }
.more { width: 12px; height: 28px; padding-left: 5px; margin-left: 2px; }
.more.boxed { box-shadow: inset -1px -1px #808080, inset 1px 1px #fff; }

.tree { flex: none; width: 405px; margin-left: 1px; display: flex; flex-direction: column; border: 1px solid; border-color: transparent #808080 #808080 #fff; }
.tabs { height: 30px; display: flex; align-items: flex-end; border-bottom: 1px solid #fff; }
.tabs button { width: 31px; height: 27px; margin-right: 1px; padding: 3px 3px 0; border: 1px solid; border-color: #fff #404040 transparent #fff; border-radius: 2px 2px 0 0; }
.tabs .on { width: 34px; height: 30px; margin-bottom: -1px; padding: 0 4px; background: #d4d0c8; border-bottom: 0; }
.opts { height: 21px; display: flex; gap: 1px; padding: 0 2px 1px; }
.opts button { width: 79px; display: flex; align-items: center; padding-left: 17px; white-space: pre; box-shadow: inset -1px -1px #404040, inset 1px 1px #fff, inset -2px -2px #808080; }
.opts .tri { margin-left: 4px; }
.list { flex: 1; margin: 0 1px; border: 2px solid; border-color: #606060 #d4d0c8 #d4d0c8 #404040; background: linear-gradient(90deg, #fff 259px, #404040 259px, #404040 261px, #fff 261px); }
table { width: 100%; border-collapse: separate; border-spacing: 0; table-layout: fixed; }
.c1 { width: 261px; }
.c2 { width: 42px; }
th { height: 16px; padding: 0 2px; font-weight: 400; text-align: left; background: #d4d0c8; box-shadow: inset -1px -1px #404040, inset 1px 1px #fff, inset -2px -2px #808080; white-space: nowrap; overflow: hidden; line-height: 14px; }
td { height: 16px; padding: 0 0 0 2px; line-height: 16px; white-space: nowrap; }
td.picked { background: #0a246a content-box; }
td:first-child { padding: 0; }
.node { position: relative; display: flex; align-items: center; height: 16px; padding-left: 22px; gap: 2px; }
.node.root { padding-left: 3px; }
.branch { position: absolute; left: 10px; top: 0; width: 12px; height: 16px; border-left: 1px dotted #808080; background: linear-gradient(90deg, #808080 1px, transparent 1px) 0 8px / 2px 1px repeat-x; }
.node.last .branch { height: 9px; }
.plus { position: absolute; left: 6px; top: 4px; width: 9px; height: 9px; border: 1px solid #808080; background: #fff; font-size: 10px; line-height: 6px; text-align: center; }

.split { flex: none; width: 12px; position: relative; border-right: 1px solid #808080; background: linear-gradient(90deg, transparent 4px, #808080 4px, #808080 6px, transparent 6px); }
.fold { position: absolute; width: 6px; height: 50px; background: #ece9e2; padding-left: 1px; box-shadow: inset 1px 1px #fff; }
.fold.a { left: 0; top: 287px; }
.fold.b { left: 5px; top: 337px; }

.view { flex: 1; min-width: 0; position: relative; background: linear-gradient(#949184, #e2e0d3); }
.view svg { position: absolute; inset: 0; width: 100%; height: 100%; }
.pull { font: 12px "Liberation Mono", monospace; fill: #ffff00; }
.active { font: 10px "Liberation Mono", "Noto Sans CJK SC", monospace; fill: #7c7a70; }
.tiny { font-size: 6px; }
.tipbox { position: absolute; left: 347px; top: 229px; padding: 0 1px; line-height: 13px; height: 15px; background: #ffffe1; border: 1px solid #000; box-shadow: 3px 3px 2px #0006; }

.status { height: 26px; display: flex; align-items: center; justify-content: flex-end; padding-right: 37px; }
.sep { width: 2px; height: 24px; border-left: 1px solid #808080; border-right: 1px solid #fff; }
.combo { position: relative; width: 178px; height: 20px; margin: 0 2px 0 96px; border: 2px solid; border-color: #808080 #fff #fff #808080; background: #fff; display: flex; }
.combo select { flex: 1; appearance: none; border: 0; padding: 0 3px; background: none; font: inherit; color: #000; border-radius: 0; }
.combo span { width: 16px; padding: 6px 4px 0; background: #d4d0c8; box-shadow: inset -1px -1px #404040, inset 1px 1px #fff, inset -2px -2px #808080; }

.desktop { flex: 0 0 130px; padding: 1px 0 0 22px; display: flex; flex-direction: column; gap: 30px; }
.desktop a { display: flex; flex-direction: column; align-items: center; color: #fff; text-decoration: none; height: 50px; }
.desktop svg { width: 32px; height: 32px; margin-bottom: 1px; }

.taskbar { height: 30px; display: flex; align-items: flex-start; background: #d4d0c8; box-shadow: inset 0 1px #d4d0c8, inset 0 2px #fff; padding: 4px 2px 0 1px; white-space: pre; }
.start, .task { height: 22px; display: flex; align-items: center; box-shadow: inset -1px -1px #404040, inset 1px 1px #fff, inset -2px -2px #808080; flex: none; }
.start { width: 48px; padding-left: 3px; gap: 2px; margin-right: 5px; }
.task { width: 160px; margin-right: 3px; padding-left: 4px; gap: 3px; }
.task.on { background: #eae8e3; padding-top: 2px; box-shadow: inset 1px 1px #404040, inset -1px -1px #fff, inset 2px 2px #808080; }
.lang { margin-left: auto; display: flex; align-items: center; height: 24px; gap: 4px; margin-right: 95px; }
.ch { background: #0a246a; color: #fff; width: 16px; height: 16px; }
.lang .ic { margin: 0 1px; }
.restore svg { display: block; width: 10px; height: 16px; shape-rendering: crispEdges; }
.tray { display: flex; align-items: center; gap: 2px; height: 24px; width: 136px; padding-left: 1px; border: 1px solid; border-color: #808080 #fff #fff #808080; }
.tray time { margin-left: 8px; }

.manager { position: absolute; left: 848px; top: 0; width: 237px; height: 67px; padding: 4px 4px 0 4px; background: #d4d0c8; box-shadow: inset -1px -1px #404040, inset 1px 1px #d4d0c8, inset -2px -2px #808080, inset 2px 2px #fff; }
.manager h2 { margin: 0; height: 19px; font-size: 13px; line-height: 17px; padding-left: 2px; color: #d4d0c8; background: linear-gradient(90deg, #808080, #c0c0c0); }
.manager button { display: flex; align-items: center; width: 100%; height: 20px; white-space: pre; }
.manager .sel { background: #0a246a; color: #fff; padding-left: 8px; }
.manager .sel svg { width: 8px; height: 12px; margin-right: 5px; }
.manager .sub { padding: 0 4px 0 3px; justify-content: space-between; }

.note { position: absolute; font: 300 27px/27px "Noto Sans CJK SC", sans-serif; color: #f00000; }
.note.box { left: 235px; top: 163px; width: 143px; height: 68px; background: #fff; padding-left: 1px; }
.note.vol { left: 324px; top: 391px; width: 112px; }
.marks { position: absolute; left: 0; top: 0; pointer-events: none; }

.brand { height: 145px; display: flex; justify-content: flex-end; align-items: flex-end; padding: 0 10px 8px 0; }
.brand svg { width: 58px; height: 58px; margin-right: -2px; }
.brand div { display: flex; flex-direction: column; }
.brand strong { font: 700 29px/42px "Noto Sans CJK SC", sans-serif; color: #a6dcb9; padding-left: 13px; }
.brand a { font: 15px/20px "Noto Sans", sans-serif; color: #cbe7e2; text-decoration: none; }
</style>
